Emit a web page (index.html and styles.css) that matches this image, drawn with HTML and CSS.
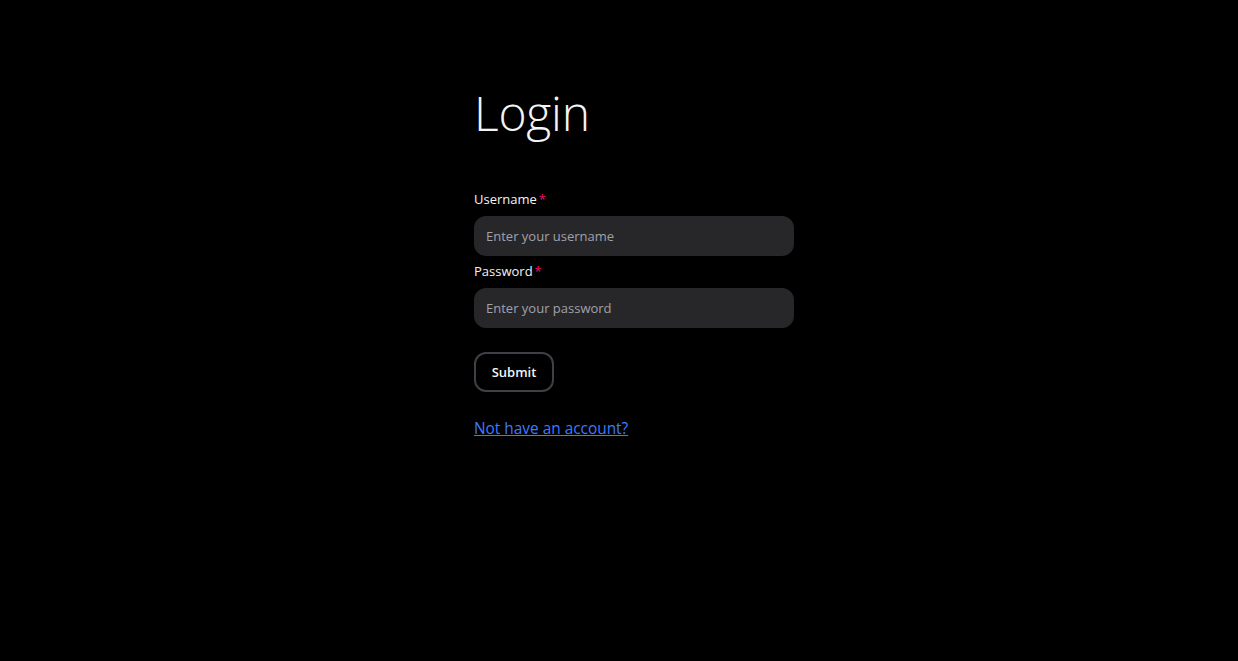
FILE: index.html
```html
<!DOCTYPE html>
<html lang="en">
<head>
<meta charset="utf-8">
<title>Login</title>
<link rel="stylesheet" href="styles.css">
</head>
<body>
<main class="page">
  <h1 class="title">Login</h1>
  <form class="form">
    <div class="field">
      <label class="label">Username<span class="req">*</span></label>
      <input class="input" type="text" placeholder="Enter your username">
    </div>
    <div class="field">
      <label class="label">Password<span class="req">*</span></label>
      <input class="input" type="password" placeholder="Enter your password">
    </div>
    <button class="submit" type="button">Submit</button>
  </form>
  <a class="link" href="#">Not have an account?</a>
</main>
</body>
</html>
```

FILE: styles.css
```css
* { box-sizing: border-box; }
html, body {
  margin: 0;
  background: #000;
  color: #ececec;
  font-family: "Open Sans", "Noto Sans", sans-serif;
}
.page {
  width: 350px;
  margin: 0 auto;
  padding: 82px 0 0 30px;
  display: flex;
  flex-direction: column;
  align-items: flex-start;
}
.title {
  margin: 0;
  font-size: 48px;
  font-weight: 350;
  line-height: 62px;
  color: #f4f4f5;
  letter-spacing: -0.2px;
}
.form {
  width: 320px;
  margin-top: 45px;
  display: flex;
  flex-direction: column;
}
.field {
  display: flex;
  flex-direction: column;
  gap: 7px;
  margin-bottom: 5px;
}
.label {
  font-size: 13px;
  line-height: 20px;
  color: #f4f4f5;
}
.req {
  color: #f31260;
  margin-left: 2px;
}
.input {
  width: 320px;
  height: 40px;
  border: none;
  outline: none;
  border-radius: 12px;
  background: #27272a;
  color: #ececec;
  padding: 0 12px;
  font-family: inherit;
  font-size: 13px;
}
.input::placeholder { color: #a1a1aa; }
.submit {
  margin-top: 19px;
  width: 80px;
  height: 40px;
  border: 2px solid #3f3f46;
  border-radius: 12px;
  background: transparent;
  color: #f4f4f5;
  font-family: inherit;
  font-size: 13px;
  font-weight: 560;
  align-self: flex-start;
}
.link {
  margin-top: 27px;
  font-size: 15.4px;
  line-height: 20px;
  color: #3b7bff;
  text-decoration: underline;
}
```
